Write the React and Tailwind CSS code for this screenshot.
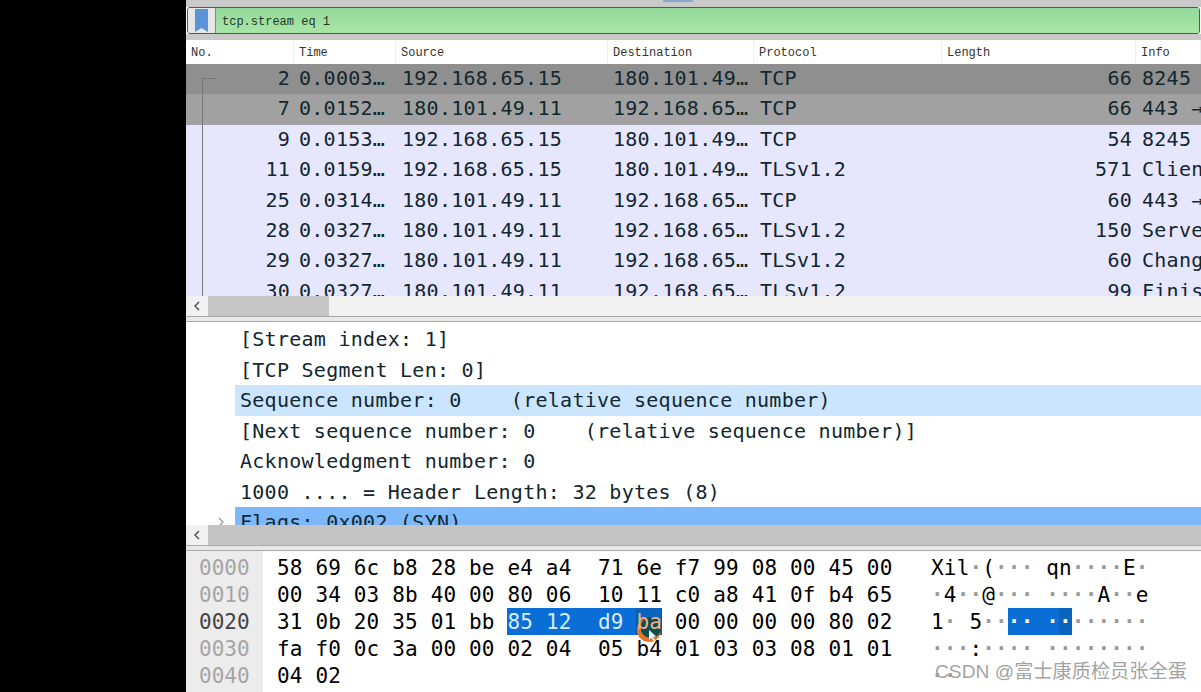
import React from 'react';

const mono = 'font-["DejaVu_Sans_Mono",monospace]';

const columns = [
  { label: 'No.', w: 'w-[108px]' },
  { label: 'Time', w: 'w-[102px]' },
  { label: 'Source', w: 'w-[212px]' },
  { label: 'Destination', w: 'w-[146px]' },
  { label: 'Protocol', w: 'w-[188px]' },
  { label: 'Length', w: 'w-[194px]' },
  { label: 'Info', w: 'flex-1' },
];

const packets = [
  ['2', '0.0003…', '192.168.65.15', '180.101.49…', 'TCP', '66', '8245', 'bg-[#8f8f8f]'],
  ['7', '0.0152…', '180.101.49.11', '192.168.65…', 'TCP', '66', '443 →', 'bg-[#a1a1a1]'],
  ['9', '0.0153…', '192.168.65.15', '180.101.49…', 'TCP', '54', '8245', 'bg-[#e7e6ff]'],
  ['11', '0.0159…', '192.168.65.15', '180.101.49…', 'TLSv1.2', '571', 'Clien', 'bg-[#e7e6ff]'],
  ['25', '0.0314…', '180.101.49.11', '192.168.65…', 'TCP', '60', '443 →', 'bg-[#e7e6ff]'],
  ['28', '0.0327…', '180.101.49.11', '192.168.65…', 'TLSv1.2', '150', 'Serve', 'bg-[#e7e6ff]'],
  ['29', '0.0327…', '180.101.49.11', '192.168.65…', 'TLSv1.2', '60', 'Chang', 'bg-[#e7e6ff]'],
  ['30', '0.0327…', '180.101.49.11', '192.168.65…', 'TLSv1.2', '99', 'Finis', 'bg-[#e7e6ff]'],
];

const details = [
  { text: '[Stream index: 1]' },
  { text: '[TCP Segment Len: 0]' },
  { text: 'Sequence number: 0    (relative sequence number)', bg: 'bg-[#cce5ff]' },
  { text: '[Next sequence number: 0    (relative sequence number)]' },
  { text: 'Acknowledgment number: 0' },
  { text: '1000 .... = Header Length: 32 bytes (8)' },
  { text: 'Flags: 0x002 (SYN)', bg: 'bg-[#7db8fa]', arrow: true },
];

const hexRows = [
  ['0000', '58 69 6c b8 28 be e4 a4', '71 6e f7 99 08 00 45 00', 'Xil·(···', 'qn····E·'],
  ['0010', '00 34 03 8b 40 00 80 06', '10 11 c0 a8 41 0f b4 65', '·4··@···', '····A··e'],
  ['0020', '31 0b 20 35 01 bb 85 12', 'd9 ba 00 00 00 00 80 02', '1· 5····', '········'],
  ['0030', 'fa f0 0c 3a 00 00 02 04', '05 b4 01 03 03 08 01 01', '···:····', '········'],
  ['0040', '04 02', '', '··', ''],
];

function ScrollBar({ dark }) {
  return (
    <div className={`flex h-5 shrink-0 ${dark ? 'bg-[#c4c4c4]' : 'bg-[#f1f1f1]'}`}>
      <div className="flex w-[22px] items-center justify-center bg-[#f1f1f1]">
        <svg width="8" height="10" viewBox="0 0 8 10" fill="none" stroke="#555" strokeWidth="1.5">
          <path d="M6 1 2 5l4 4" />
        </svg>
      </div>
      {dark ? null : <div className="w-[121px] bg-[#c6c6c6]" />}
    </div>
  );
}

function Splitter() {
  return <div className="h-1.5 shrink-0 border-y border-[#a8a8a8] bg-[#e8e8e8]" />;
}

function AsciiChars({ text, selectFrom = -1, selectTo = -1, darkAt = -1 }) {
  return (
    <div className="flex">
      {text.split('').map((c, i) => {
        const picked = i >= selectFrom && i < selectTo;
        let tone = c === '·' ? 'font-bold text-[#999]' : '';
        if (picked) tone = i === darkAt ? 'bg-[#0a63bd] font-bold text-white' : 'bg-[#0a6ed6] font-bold text-white';
        return (
          <span key={i} className={`h-[27px] w-[12.8px] text-center ${tone}`}>
            {c === ' ' ? '\u00a0' : c}
          </span>
        );
      })}
    </div>
  );
}

function PointerMark() {
  return (
    <svg className="absolute -left-[1px] top-[9px] z-0" width="26" height="26" viewBox="0 0 26 26">
      <circle cx="13" cy="13" r="12" fill="#e8762a" />
      <circle cx="15" cy="10.5" r="10.5" fill="#0f4d52" />
      <path d="M13 13v10l2.5-2.2 2 3.2 1.6-1-2-3.1 3.2-.4z" fill="#eef2f2" />
    </svg>
  );
}

export default function App() {
  return (
    <div className="flex h-[692px] w-[1201px] overflow-hidden bg-black">
      <div className="w-[186px] shrink-0" />
      <div className="relative flex min-w-0 flex-1 flex-col bg-white text-[#12272e]">
        <div className="relative h-[7px] shrink-0 bg-[#c9c9c9]">
          <div className="absolute left-[477px] top-0 h-0.5 w-[30px] bg-[#8aa6cc]" />
        </div>
        <div className="mx-px flex h-[27px] shrink-0 overflow-hidden rounded-[3px] border border-[#555]">
          <div className="flex w-[28px] items-center justify-center border-r border-[#888] bg-[#e6e6e6]">
            <svg width="13" height="23" viewBox="0 0 13 23">
              <path d="M0 0h13v23l-6.5-4L0 23z" fill="#5b93d6" />
            </svg>
          </div>
          <div className="flex flex-1 items-center bg-gradient-to-b from-[#94d89b] to-[#a8e6a6] pl-[6px] pt-0.5 font-['Liberation_Mono',monospace] text-xs text-[#1c3a2c]">
            tcp.stream eq 1
          </div>
        </div>
        <div className="h-1.5 shrink-0 bg-[#c9c9c9]" />

        <div className="flex h-6 shrink-0 bg-white font-['Liberation_Mono',monospace] text-xs text-[#333]">
          {columns.map((c) => (
            <div key={c.label} className={`${c.w} flex items-center border-r border-[#efefef] pl-[5px] pt-0.5`}>
              {c.label}
            </div>
          ))}
        </div>

        <div className={`relative h-[232px] shrink-0 overflow-hidden ${mono} text-[20px] leading-[29px] tracking-[0.27px]`}>
          {packets.map((p) => (
            <div key={p[0]} className={`flex h-[30.4px] whitespace-nowrap ${p[7]}`}>
              <div className="w-[104px] text-right">{p[0]}</div>
              <div className="w-[112px] pl-[9px]">{p[1]}</div>
              <div className="w-[211px]">{p[2]}</div>
              <div className="w-[147px]">{p[3]}</div>
              <div className="w-[186px]">{p[4]}</div>
              <div className="w-[186px] text-right">{p[5]}</div>
              <div className="flex-1 overflow-hidden pl-[10px]">{p[6]}</div>
            </div>
          ))}
          <div className="absolute left-4 top-[14px] h-px w-3.5 bg-[#777]" />
          <div className="absolute bottom-0 left-4 top-[14px] w-px bg-[#777]" />
        </div>

        <ScrollBar />
        <Splitter />

        <div className={`h-[203px] shrink-0 overflow-hidden pt-0.5 ${mono} text-[20px] leading-[30.5px] tracking-[0.27px]`}>
          {details.map((d) => (
            <div key={d.text} className="relative h-[30.5px] whitespace-pre pl-[49px]">
              {d.arrow && (
                <svg className="absolute left-[31px] top-[10px]" width="8" height="10" viewBox="0 0 8 10" fill="none" stroke="#999" strokeWidth="1.3">
                  <path d="M2 1l4 4-4 4" />
                </svg>
              )}
              <div className={`pl-[5px] ${d.bg || ''}`}>{d.text}</div>
            </div>
          ))}
        </div>

        <ScrollBar dark />
        <Splitter />

        <div className={`relative flex flex-1 bg-white pt-[3px] ${mono} text-[21px] leading-[29px]`}>
          <div className="-mt-[3px] w-[77px] shrink-0 bg-[#ececec] pl-[13px] pt-[3px]">
            {hexRows.map((r) => (
              <div key={r[0]} className={`h-[27px] ${r[0] === '0020' ? 'text-[#444]' : 'text-[#a5a5a5]'}`}>
                {r[0]}
              </div>
            ))}
          </div>
          <div className="w-[668px] shrink-0 pl-[14px] tracking-[0.16px] text-black">
            {hexRows.map((r, i) => (
              <div key={r[0]} className="flex h-[27px] whitespace-pre">
                {i === 2 ? (
                  <>
                    <span className="flex w-[321px]">
                      <span>31 0b 20 35 01 bb </span>
                      <span className="flex-1 bg-[#0a6ed6] text-[#d7ecff]">85 12</span>
                    </span>
                    <span className="bg-[#0a6ed6] text-[#d7ecff]">d9 </span>
                    <span className="relative w-[25.6px] border-x border-[#0a58a8] bg-[#0a63bd]">
                      <PointerMark />
                      <span className="relative z-10 -ml-px text-[#f0b084]">ba</span>
                    </span>
                    <span> 00 00 00 00 80 02</span>
                  </>
                ) : (
                  <>
                    <span className="w-[321px]">{r[1]}</span>
                    <span>{r[2]}</span>
                  </>
                )}
              </div>
            ))}
          </div>
          <div className="text-black">
            {hexRows.map((r, i) => (
              <div key={r[0]} className="flex h-[27px]">
                <AsciiChars text={r[3]} selectFrom={i === 2 ? 6 : -1} selectTo={i === 2 ? 8 : -1} />
                <div className={`h-[27px] w-[12.8px] ${i === 2 ? 'bg-[#0a6ed6]' : ''}`} />
                <AsciiChars text={r[4]} selectFrom={i === 2 ? 0 : -1} selectTo={i === 2 ? 2 : -1} darkAt={1} />
              </div>
            ))}
          </div>
          <div className="absolute left-[749px] top-[109px] font-['Liberation_Sans','Noto_Sans_CJK_SC',sans-serif] text-[19.2px] leading-6 text-[#a3a3a3]">
            CSDN @富士康质检员张全蛋
          </div>
        </div>
      </div>
    </div>
  );
}
